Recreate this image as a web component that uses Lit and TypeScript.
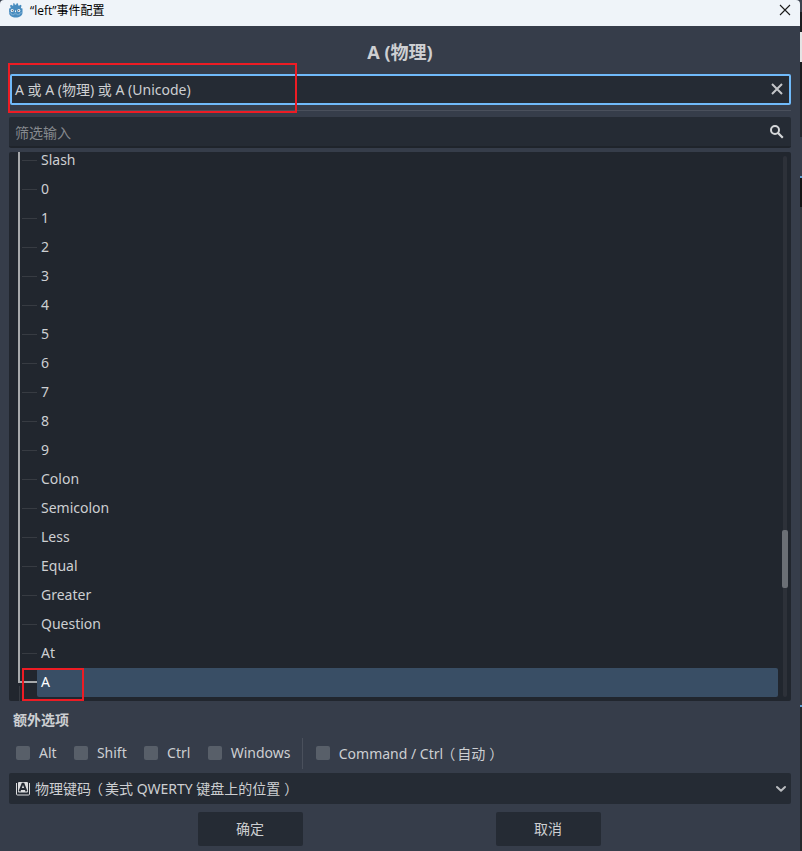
import { css, html, LitElement, svg } from 'lit'
import { customElement, property } from 'lit/decorators.js'
import { classMap } from 'lit/directives/class-map.js'

const KEYS = [
	'Slash', '0', '1', '2', '3', '4', '5', '6', '7', '8', '9',
	'Colon', 'Semicolon', 'Less', 'Equal', 'Greater', 'Question', 'At', 'A',
]

const MODIFIERS = ['Alt', 'Shift', 'Ctrl', 'Windows']

const godotIcon = svg`
	<svg width="15" height="15" viewBox="0 0 15 15">
		<path fill="#478cbf" d="M5 .6 6.300 .2 6.900 1.700h1.200L8.700 .2l1.300 .4 .2 1.700 .8 .4 1.500-.9 1.100 1-.7 1.600.3.900 1.300.2v4.200c0 2.900-3.100 4.800-6.700 4.800s-6.700-1.900-6.700-4.800V5.500l1.300-.2.3-.9-.7-1.600 1.100-1 1.500.9.8-.4z"/>
		<path fill="none" stroke="#9cc1dc" stroke-width=".6" d="M.9 9.700l2.300.4.300 1.500 2.300.2.300-1h2.800l.3 1 2.300-.2.300-1.500 2.300-.4"/>
		<circle cx="4.200" cy="7.500" r="1.500" fill="#fff"/>
		<circle cx="10.800" cy="7.500" r="1.500" fill="#fff"/>
		<circle cx="4.400" cy="7.600" r=".8" fill="#6a7480"/>
		<circle cx="10.600" cy="7.600" r=".8" fill="#6a7480"/>
		<path stroke="#fff" stroke-width=".9" d="M7.500 7.400v1.800"/>
	</svg>
`

const closeIcon = svg`
	<svg class="close" width="12" height="12" viewBox="0 0 12 12">
		<path fill="none" stroke="#1a1a1a" stroke-width="1.100" d="M1 1l10 10M11 1L1 11"/>
	</svg>
`

const clearIcon = svg`
	<svg class="clear" width="16" height="16" viewBox="0 0 16 16">
		<path fill="none" stroke="#c3c5c8" stroke-width="2" d="M3 3l10 10M13 3L3 13"/>
	</svg>
`

const searchIcon = svg`
	<svg width="16" height="16" viewBox="0 0 16 16">
		<circle cx="6" cy="6" r="4" fill="none" stroke="#d5d7d9" stroke-width="2"/>
		<path fill="none" stroke="#d5d7d9" stroke-width="2.200" d="M8.800 8.800l5 5"/>
	</svg>
`

const keyIcon = svg`
	<svg width="16" height="16" viewBox="0 0 16 16">
		<rect x="3" y="1" width="10" height="10.500" rx="1" fill="#dcdddf"/>
		<path fill="none" stroke="#dcdddf" d="M1.500 2v11a1 1 0 0 0 1 1h11a1 1 0 0 0 1-1V2"/>
		<path fill="none" stroke="#252b34" stroke-width="1.900" d="M4.500 10.300L7.500 2.600h1l3 7.700M5.500 8h5"/>
	</svg>
`

const arrowIcon = svg`
	<svg width="12" height="12" viewBox="0 0 12 12">
		<path fill="none" stroke="#b9bcbf" stroke-width="2" stroke-linecap="round" stroke-linejoin="round" d="M2 4l4 3.800L10 4"/>
	</svg>
`

@customElement('key-row')
export class KeyRow extends LitElement {
	@property() label = ''
	@property({ type: Boolean }) selected = false

	static styles = css`
		:host {
			display: block;
			flex: none;
		}

		.row {
			display: grid;
			grid-template-columns: 15px 1fr;
			align-items: center;
			height: 29px;
			margin-left: 13px;
			color: #cdcfd2;
		}

		.row.selected {
			grid-template-columns: 19px 1fr;
			margin-left: 9px;
			color: #fff;
		}

		.branch {
			height: 1px;
			background: #373b42;
		}

		.selected .branch {
			height: 2px;
			margin-bottom: 1px;
			background: #a7a9ab;
		}

		.label {
			height: 29px;
			padding-left: 4px;
			line-height: 27px;
			border-radius: 2px;
		}

		.selected .label {
			background: #394e65;
		}
	`

	render() {
		return html`
			<div class=${classMap({ row: true, selected: this.selected })}>
				<span class="branch"></span>
				<span class="label">${this.label}</span>
			</div>
		`
	}
}

@customElement('app-root')
export class AppRoot extends LitElement {
	static styles = css`
		:host {
			display: block;
			font-family: 'Noto Sans', 'Noto Sans CJK SC', sans-serif;
			font-size: 14px;
			color: #cdcfd2;
		}

		* {
			box-sizing: border-box;
		}

		svg {
			display: block;
			flex: none;
		}

		.desktop {
			position: relative;
			display: flex;
			height: 851px;
			overflow: hidden;
			background: #1b1d20;
		}

		.window {
			display: flex;
			flex-direction: column;
			width: 800px;
			background: #363d4a;
		}

		/* sliver of the editor behind the dialog */
		.edge {
			flex: 1;
			background: linear-gradient(
				#3a414d 12px,
				#1b1d20 12px 32px,
				#e4e4e4 32px 62px,
				#1b1d20 62px 100px,
				#24282e 100px 137px,
				#363d4a 137px 176px,
				#5c9ccf 176px 178px,
				#141414 178px 207px,
				#33373d 207px 705px,
				#5c9ccf 705px 707px,
				#25282c 707px
			);
		}

		.titlebar {
			display: flex;
			align-items: center;
			height: 26px;
			padding: 0 9px 5px 8px;
			background: #eff4f9;
			border-radius: 4px 4px 0 0;
			color: #000;
			font: 12px/20px 'Open Sans', 'Noto Sans CJK SC', sans-serif;
		}

		.titlebar span {
			flex: 1;
			padding-left: 7px;
		}

		.close {
			margin-bottom: 1px;
		}

		.content {
			display: flex;
			flex-direction: column;
			padding: 0 9px;
		}

		.event {
			height: 48px;
			font-size: 18px;
			font-weight: 700;
			line-height: 52px;
			text-align: center;
		}

		.field {
			display: flex;
			align-items: center;
			justify-content: space-between;
			height: 31px;
			padding: 0 6px;
			background: #252b34;
			border-radius: 2px;
			line-height: 31px;
		}

		.field.focused {
			padding: 0 4px 0 3px;
			border: 2px solid #70bafa;
			margin-left: 1px;
			line-height: 27px;
		}

		.clear {
			margin-bottom: 2px;
		}

		.separator {
			height: 1px;
			margin: 5px 0 6px;
			background: #4a505c;
		}

		.filter {
			border-bottom: 2px solid #1f242b;
			color: #85898e;
		}

		.filter span {
			padding-top: 2px;
		}

		.tree {
			position: relative;
			display: flex;
			height: 549px;
			margin-top: 4px;
			padding-right: 4px;
			overflow: hidden;
			background: #21262e;
			border-radius: 2px;
		}

		.rows {
			display: flex;
			flex: 1;
			flex-direction: column;
			margin: -6px 5px 0 0;
		}

		.trunk {
			position: absolute;
			top: 0;
			left: 9px;
			width: 2px;
			height: 531px;
			background: #a7a9ab;
		}

		.trunk.rest {
			top: 534px;
			left: 10px;
			width: 1px;
			height: 15px;
			background: #373b42;
		}

		.scroll {
			width: 4px;
			height: 541px;
			margin-top: 4px;
			background: #2d3139;
			border-radius: 2px;
		}

		.thumb {
			width: 6px;
			height: 58px;
			margin: 374px 0 0 -1px;
			background: #6b6f75;
			border-radius: 2px;
		}

		.heading {
			height: 37px;
			padding-left: 4px;
			font-weight: 700;
			line-height: 37px;
		}

		.modifiers {
			display: flex;
			align-items: center;
			height: 31px;
			padding-left: 7px;
			white-space: nowrap;
		}

		.check {
			display: flex;
			gap: 9px;
			height: 31px;
			margin-right: 17.300px;
			line-height: 29px;
		}

		.divider ~ .check {
			line-height: 31px;
		}

		.box {
			width: 14px;
			height: 14px;
			margin-top: 8px;
			background: #585f69;
			border-radius: 2px;
		}

		.divider {
			width: 1px;
			height: 31px;
			margin: 0 13px 0 -6px;
			background: #4a505c;
		}

		.open {
			margin: 0 2px 0 -2px;
		}

		.shut {
			margin: 0 -4px 0 4px;
		}

		.mode {
			margin-top: 4px;
			padding-right: 4px;
		}

		.mode-name {
			flex: 1;
			padding-left: 4px;
		}

		.actions {
			display: flex;
			justify-content: center;
			gap: 193px;
			margin: 8px 2px 0 0;
		}

		.button {
			width: 105px;
			height: 34px;
			background: #252b34;
			border-radius: 2px;
			line-height: 34px;
			text-align: center;
		}

		.mark {
			position: absolute;
			border: 2px solid #ed1c24;
		}

		.mark.events {
			top: 63px;
			left: 8px;
			width: 289px;
			height: 50px;
		}

		.mark.key {
			top: 668px;
			left: 22px;
			width: 62px;
			height: 33px;
		}
	`

	renderCheck(label: unknown) {
		return html`<label class="check"><i class="box"></i><span>${label}</span></label>`
	}

	// fullwidth parentheses, centred in their cells
	renderParens(text: string) {
		return html`<span class="open">（</span>${text}<span class="shut">）</span>`
	}

	render() {
		return html`
			<div class="desktop">
				<div class="window">
					<header class="titlebar">
						${godotIcon}
						<span>“left”事件配置</span>
						${closeIcon}
					</header>
					<main class="content">
						<div class="event">A (物理)</div>
						<div class="field focused">A 或 A (物理) 或 A (Unicode) ${clearIcon}</div>
						<div class="separator"></div>
						<div class="field filter"><span>筛选输入</span>${searchIcon}</div>
						<div class="tree">
							<div class="rows">
								${KEYS.map(
									(key) => html`<key-row .label=${key} ?selected=${key === 'A'}></key-row>`
								)}
							</div>
							<div class="scroll"><div class="thumb"></div></div>
							<i class="trunk"></i>
							<i class="trunk rest"></i>
						</div>
						<div class="heading">额外选项</div>
						<div class="modifiers">
							${MODIFIERS.map((label) => this.renderCheck(label))}
							<i class="divider"></i>
							${this.renderCheck(html`Command / Ctrl${this.renderParens('自动')}`)}
						</div>
						<div class="field mode">
							${keyIcon}
							<span class="mode-name">物理键码${this.renderParens('美式 QWERTY 键盘上的位置')}</span>
							${arrowIcon}
						</div>
						<div class="actions">
							<div class="button">确定</div>
							<div class="button">取消</div>
						</div>
					</main>
				</div>
				<div class="edge"></div>
				<div class="mark events"></div>
				<div class="mark key"></div>
			</div>
		`
	}
}
